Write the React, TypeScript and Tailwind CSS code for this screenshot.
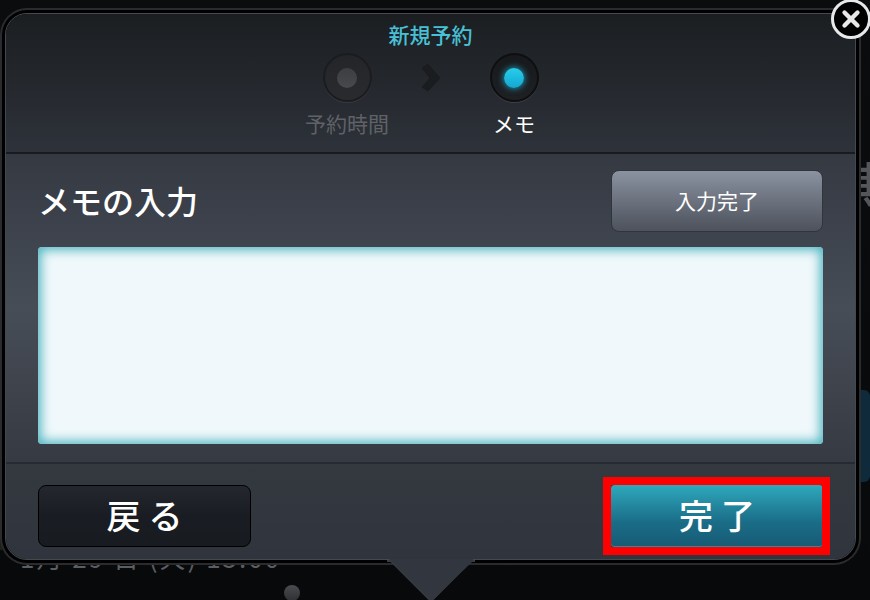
import React from 'react';
import { X } from 'lucide-react';

const font = { fontFamily: '"Noto Sans CJK JP", "Noto Sans", sans-serif' };

const Step = ({ label, active }: { label: string; active?: boolean }) => (
  <div className="flex w-[100px] flex-col items-center">
    {active ? (
      <div className="flex h-[49px] w-[49px] items-center justify-center rounded-full border-2 border-[#0e0f11] bg-gradient-to-b from-[#17191c] to-[#1e2023] shadow-[0_1px_0_#3a3e45]">
        <div className="h-[20px] w-[20px] rounded-full bg-gradient-to-b from-[#28cdea] to-[#12a8d0] shadow-[0_0_7px_#1fb6da]" />
      </div>
    ) : (
      <div className="flex h-[49px] w-[49px] items-center justify-center rounded-full border-2 border-[#1b1c1f] bg-gradient-to-b from-[#232529] to-[#292b2f] shadow-[0_1px_0_#363a41]">
        <div className="h-[20px] w-[20px] rounded-full bg-gradient-to-b from-[#3d3e42] to-[#48494d]" />
      </div>
    )}
    <span
      className={`mt-[5px] text-[21px] leading-[32px] ${active ? 'text-white' : 'text-[#5f6266]'}`}
    >
      {label}
    </span>
  </div>
);

export default function App() {
  return (
    <div
      className="relative h-[600px] w-[870px] overflow-hidden bg-gradient-to-b from-[#0b0c0e] to-[#08090b]"
      style={font}
    >
      {/* page behind the popup */}
      <div className="absolute left-[20px] top-[541px] text-[26px] leading-[32px] tracking-[2px] text-[#5c5e61]">
        1月 29 日 (火) 15:00
      </div>
      <div className="absolute left-[284px] top-[585px] h-[16px] w-[16px] rounded-full bg-gradient-to-b from-[#4a4c50] to-[#2e3034]" />
      <div className="absolute left-[848px] top-[153px] text-[50px] font-medium leading-[58px] text-[#55565a]">
        期
      </div>
      <div className="absolute left-[858px] top-[390px] h-[92px] w-[12px] rounded-r-[6px] bg-[#0f2a3a]" />
      <div className="absolute left-0 top-[150px] h-[400px] w-[2px] bg-[#1a2410]" />

      <div className="relative ml-[5px] mt-[13px] flex h-[547px] w-[851px] flex-col rounded-[22px] border border-[#44484f] shadow-[0_0_0_3px_#000,0_0_0_5px_#2a2b2e]">
        <header className="flex h-[140px] flex-col items-center rounded-t-[21px] border-b-2 border-[#191b1f] bg-gradient-to-b from-[#1b1e21] to-[#2e323a] pt-[4px]">
          <h1 className="text-[21px] font-medium leading-[32px] text-[#48c0d6]">新規予約</h1>
          <div className="mt-[3px] flex">
            <Step label="予約時間" />
            <div className="flex h-[49px] w-[67px] items-center justify-center">
              <svg width="20" height="29" viewBox="0 0 20 29">
                <path
                  d="M1 5 L7 1 L19 15 L7 28 L1 24 L9 15 Z"
                  fill="#1a1c1f"
                  stroke="#1a1c1f"
                  strokeLinejoin="round"
                />
              </svg>
            </div>
            <Step label="メモ" active />
          </div>
        </header>

        <section className="h-[310px] border-b-2 border-[#272a30] bg-gradient-to-b from-[#343942] via-[#474d57] via-50% to-[#363a42] px-[32px] pt-[16px]">
          <div className="flex items-center justify-between">
            <h2 className="mb-[2px] text-[32px] font-medium leading-[58px] text-white">メモの入力</h2>
            <button className="h-[62px] w-[212px] rounded-[8px] border border-[#31343a] bg-gradient-to-b from-[#8b93a1] to-[#4d525c] text-[21px] text-white">
              入力完了
            </button>
          </div>
          <textarea className="mt-[15px] block h-[197px] w-[785px] resize-none rounded-[4px] bg-[#f0f8fb] shadow-[inset_0_0_11px_3px_#4fb5c0] outline-none" />
        </section>

        <footer className="flex flex-1 items-start justify-between rounded-b-[21px] bg-gradient-to-b from-[#34383f] to-[#30343c] px-[32px] pt-[21px]">
          <button className="h-[62px] w-[213px] rounded-[8px] border border-black bg-gradient-to-b from-[#24272d] via-[#191c22] to-[#181b20] pb-[3px] pl-[8px] text-[34px] font-medium tracking-[8px] text-white">
            戻る
          </button>
          <button className="relative h-[62px] w-[212px] rounded-[4px] bg-gradient-to-b from-[#2fa9bd] via-[#1a6d87] via-60% to-[#175a75] pb-[3px] pl-[8px] text-[34px] font-medium tracking-[8px] text-white shadow-[inset_0_-1px_0_#2a8a9c]">
            完了
            <span className="absolute -bottom-[8px] -left-[8px] -right-[7px] -top-[8px] border-[8px] border-[#fe0000]" />
          </button>
        </footer>

        {/* arrow under the popup */}
        <svg className="absolute left-[381px] top-[545px]" width="90" height="42" viewBox="0 0 90 42">
          <path d="M0 2 H4 L44 42 L 84 2 H88" fill="#32363e" stroke="#3a3c41" strokeWidth="2" />
          <path d="M2 0 H86 V2 L44 42 Z" fill="#32363e" />
        </svg>
      </div>

      <button className="absolute -top-px left-[831px] flex h-[40px] w-[40px] items-center justify-center rounded-full border-[3px] border-[#e6e8ea] bg-black">
        <X size={26} strokeWidth={4} color="#e8e8e8" />
      </button>
    </div>
  );
}
